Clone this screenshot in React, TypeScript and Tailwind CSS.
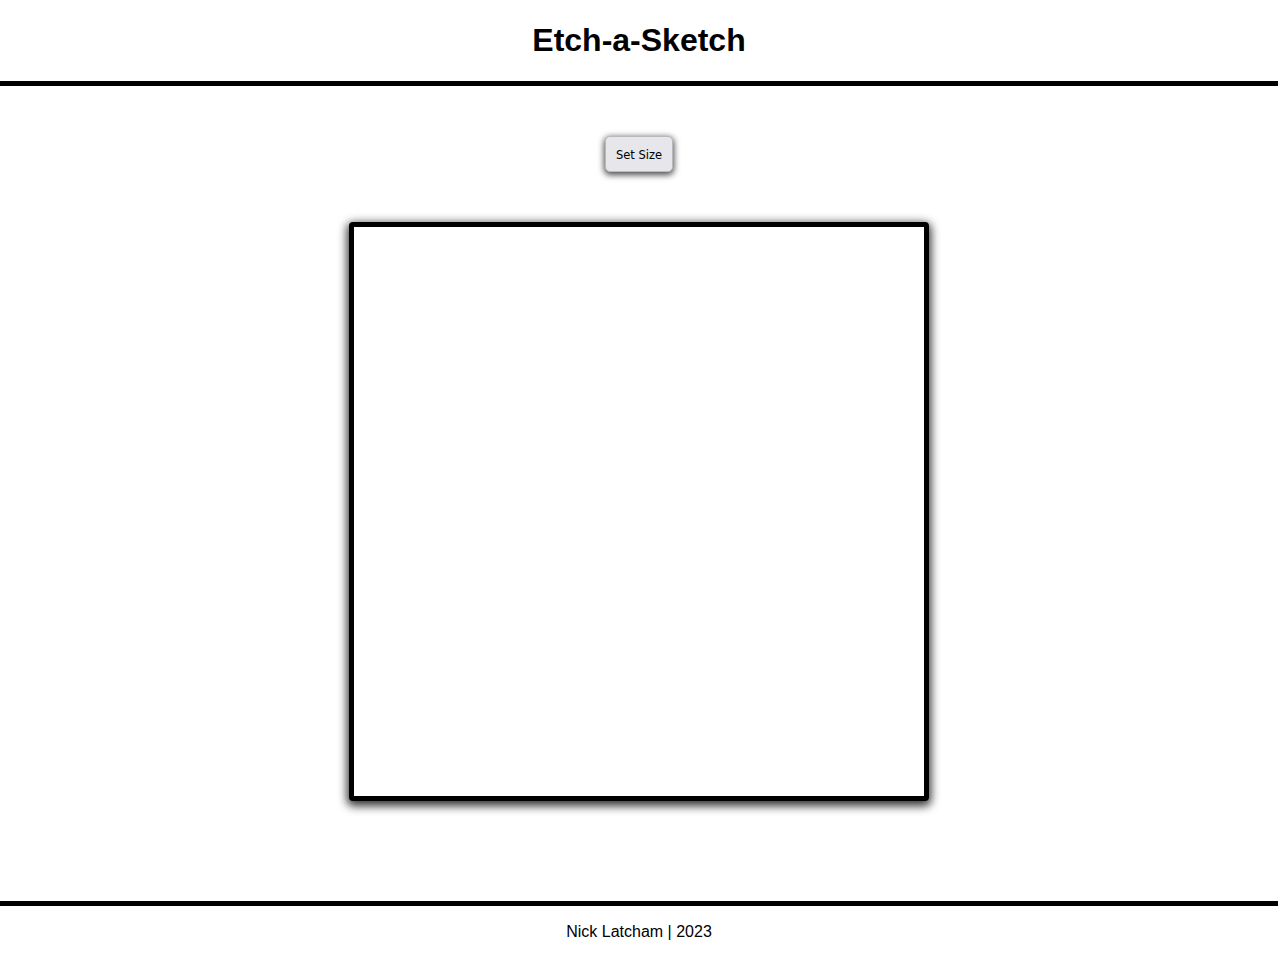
export default function App() {
  return (
    <div className="min-h-[966px] flex flex-col bg-white text-black" style={{ fontFamily: '"Liberation Sans", Arial, sans-serif' }}>
      <header className="h-[86px] flex items-center justify-center border-b-[5px] border-black">
        <h1 className="text-[32px] font-bold leading-[37px]">Etch-a-Sketch</h1>
      </header>
      <main className="flex flex-col items-center pt-[50px] pb-[100px]">
        <button className="w-[68px] h-[36px] pt-[3px] rounded-[5px] bg-[#e6e6eb] border border-[#b8b8be] shadow-[0_2px_6px_1px_rgba(0,0,0,0.7)]" style={{ fontFamily: '"DejaVu Sans", Verdana, sans-serif', fontSize: '11.5px' }}>
          Set Size
        </button>
        <div className="mt-[50px] w-[580px] h-[579px] border-[5px] border-black rounded-[4px] bg-white shadow-[0_3px_10px_2px_rgba(0,0,0,0.8)]" />
      </main>
      <footer className="border-t-[5px] border-black pt-[17px] h-[65px] flex justify-center">
        <span className="text-[16px] leading-[18px]">Nick Latcham | 2023</span>
      </footer>
    </div>
  );
}
